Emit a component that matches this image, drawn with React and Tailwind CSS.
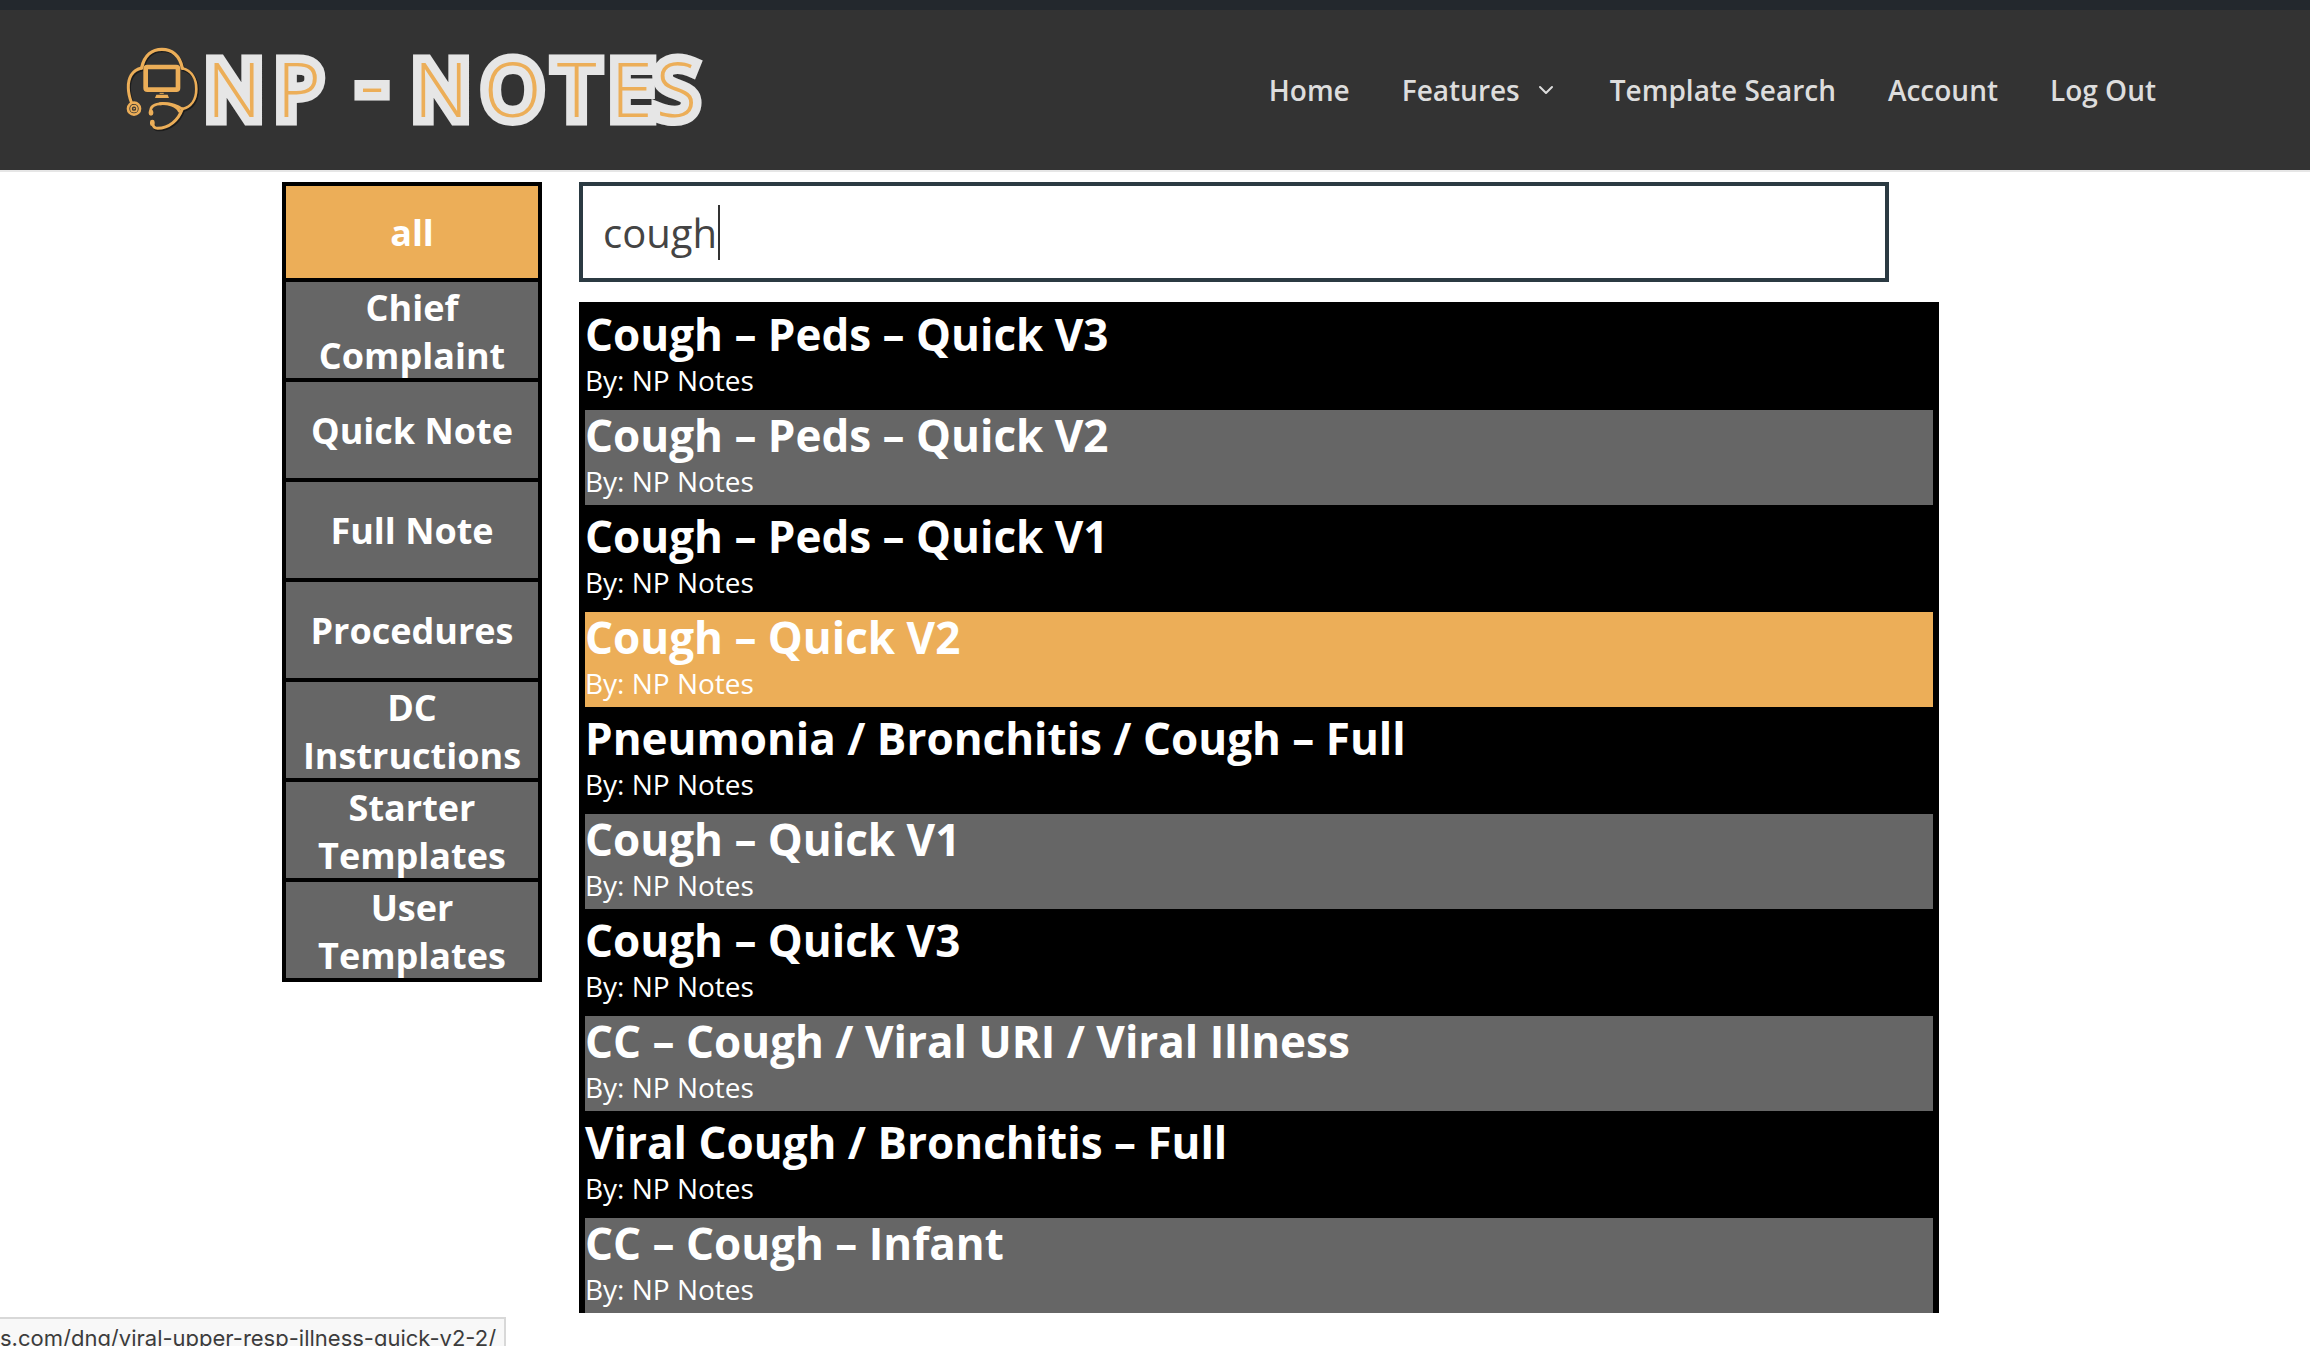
import React, { useState } from "react";
import { FiChevronDown } from "react-icons/fi";

const NAV = [
  { label: "Home" },
  { label: "Features", menu: true },
  { label: "Template Search" },
  { label: "Account" },
  { label: "Log Out" },
];

const CATEGORIES = [
  "all",
  "Chief Complaint",
  "Quick Note",
  "Full Note",
  "Procedures",
  "DC Instructions",
  "Starter Templates",
  "User Templates",
];

const RESULTS = [
  "Cough – Peds – Quick V3",
  "Cough – Peds – Quick V2",
  "Cough – Peds – Quick V1",
  "Cough – Quick V2",
  "Pneumonia / Bronchitis / Cough – Full",
  "Cough – Quick V1",
  "Cough – Quick V3",
  "CC – Cough / Viral URI / Viral Illness",
  "Viral Cough / Bronchitis – Full",
  "CC – Cough – Infant",
];

function Logo() {
  return (
    <svg viewBox="0 0 600 86" className="w-[600px] h-[86px] overflow-visible" role="img" aria-label="NP - Notes">
      {/* stethoscope around a monitor */}
      <g
        transform="translate(-5 -12) scale(.3333)"
        fill="none"
        stroke="#ecae58"
        strokeWidth="10"
        strokeLinecap="round"
        strokeLinejoin="round"
      >
        <g transform="translate(3 4)" stroke="#1c1c1c">
          <path d="M95 99C103 60 127 43 156 43s54 18 61 57" />
          <path d="M95 99C66 105 54 130 55 158c0 18 4 30 9 44" />
          <path d="M217 100c30 8 42 34 42 62 0 32-16 54-42 60" />
          <path d="M217 222c-12 34-40 58-74 58-10 0-14-6-15-14" />
        </g>
        <path d="M95 99C103 60 127 43 156 43s54 18 61 57" />
        <path d="M95 99C66 105 54 130 55 158c0 18 4 30 9 44" strokeWidth="9" />
        <path d="M217 100c30 8 42 34 42 62 0 32-16 54-42 60" strokeWidth="8" />
        <rect x="107" y="96" width="97" height="68" rx="5" strokeWidth="14" />
        <path d="M139 179h34l4 10h-42z" fill="#ecae58" stroke="none" />
        <path d="M150 175h10" strokeWidth="3" />
        <circle cx="72" cy="221" r="18" strokeWidth="8" />
        <circle cx="72" cy="221" r="9" strokeWidth="5" />
        <circle cx="72" cy="221" r="2" strokeWidth="2" />
        <path d="M122 230c-2-16 10-23 36-24 22-1 42 4 59 16" strokeWidth="8" />
        <path d="M150 206c26-2 50 6 58 22" strokeWidth="9" />
        <path d="M217 222c-12 34-40 58-74 58-10 0-14-6-15-14" strokeWidth="9" />
        <path d="M123 231v4M127 261v5" strokeWidth="14" />
      </g>
      <text
        x="92 162 220 245 280 299 369 442 496 541"
        y="70 70 70 64 70 70"
        fontSize="75"
        fontWeight="300"
        fill="#ecae58"
        stroke="#e6e6e6"
        strokeWidth="17"
        strokeMiterlimit="2"
        paintOrder="stroke"
        className="font-['Open_Sans',sans-serif]"
      >
        NP - NOTES
      </text>
    </svg>
  );
}

export default function App() {
  const [query, setQuery] = useState("cough");
  const [category, setCategory] = useState("all");
  const hovered = 3;

  const rowColor = (i) => {
    if (i === hovered) return "bg-[#ecae58]";
    return i % 2 ? "bg-[#666666]" : "bg-black";
  };

  return (
    <div className="min-h-screen bg-white font-['Open_Sans',sans-serif]">
      <div className="h-2.5 bg-[#23282d]" />

      {/* Header */}
      <header className="h-[162px] bg-[#333333] border-b-2 border-[#e6e6e6] pl-[115px] pr-[154px] flex items-center justify-between">
        <a href="#home">
          <Logo />
        </a>
        <nav className="flex items-center gap-[52px] text-[28px] font-semibold text-[#dddddd]">
          {NAV.map((item) => (
            <a key={item.label} href="#" className="flex items-center gap-3.5 whitespace-nowrap">
              {item.label}
              {item.menu && <FiChevronDown className="size-6" />}
            </a>
          ))}
        </nav>
      </header>

      <div className="max-w-[1746px] mx-auto pt-2.5 flex items-start gap-[37px]">
        {/* Categories */}
        <aside className="w-[260px] shrink-0 border-x-4 border-black">
          {CATEGORIES.map((name) => (
            <button
              key={name}
              type="button"
              onClick={() => setCategory(name)}
              className={`block w-full h-[100px] pt-0.5 border-b-4 first:border-t-4 border-black text-[36px] leading-[48px] font-bold text-white text-center ${
                category === name ? "bg-[#ecae58]" : "bg-[#666666]"
              }`}
            >
              {name}
            </button>
          ))}
        </aside>

        {/* Search + results */}
        <main className="flex-1 pr-[89px]">
          <div className="relative mr-[50px]">
            <input
              type="text"
              aria-label="Search templates"
              value={query}
              onChange={(e) => setQuery(e.target.value)}
              className="block w-full h-[100px] border-4 border-[#2b3a42] bg-white px-5 text-[40px] text-[#444444] focus:outline-none"
            />
            <span className="absolute left-[139px] top-[23px] w-0.5 h-[55px] bg-[#333333]" aria-hidden="true" />
          </div>

          <ul className="mt-5 bg-black px-1.5 pt-[7px] flex flex-col gap-1.5 text-white">
            {RESULTS.map((title, i) => (
              <li key={title} className={`h-[95px] ${rowColor(i)}`}>
                <a href="#" className="block">
                  <h2 className="text-[44px] leading-[50px] font-bold">{title}</h2>
                  <p className="text-[28px] leading-[42px]">By: NP Notes</p>
                </a>
              </li>
            ))}
          </ul>
        </main>
      </div>

      {/* Link preview */}
      <div className="fixed left-0 bottom-0 h-[29px] pr-2 overflow-hidden border-t-2 border-r-2 border-[#d8d8d8] bg-[#f8f8f8] font-['Inter',sans-serif] text-[22px] leading-[38px] text-[#3c3c3c] whitespace-nowrap">
        s.com/dng/viral-upper-resp-illness-quick-v2-2/
      </div>
    </div>
  );
}
